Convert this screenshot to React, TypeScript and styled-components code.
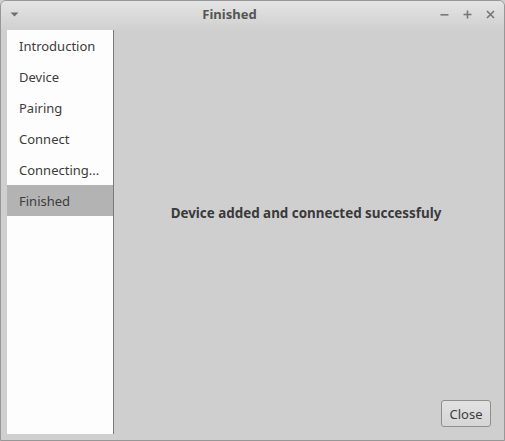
import React from 'react';
import styled, { createGlobalStyle } from 'styled-components';

const GlobalStyle = createGlobalStyle`
  html, body {
    margin: 0;
    padding: 0;
    width: 505px;
    height: 441px;
    overflow: hidden;
    background: #cfcfcf;
  }
  body {
    font-family: "Noto Sans", "Open Sans", sans-serif;
  }
`;

const Window = styled.div`
  box-sizing: border-box;
  width: 505px;
  height: 441px;
  display: flex;
  flex-direction: column;
  background: #cfcfcf;
  border: 1px solid #979797;
  border-radius: 6px 6px 0 0;
  overflow: hidden;
`;

const TitleBar = styled.div`
  height: 29px;
  flex: none;
  display: flex;
  align-items: center;
  padding: 0 9px 3px 9px;
  box-sizing: border-box;
  background: linear-gradient(#e4e4e4, #d0d0d0);
`;

const TitleText = styled.div`
  flex: 1;
  text-align: center;
  font-size: 13px;
  font-weight: bold;
  color: #555555;
`;

const TitleButtons = styled.div`
  display: flex;
  align-items: center;
  gap: 14px;
`;

const IconWrap = styled.span`
  display: flex;
  width: 9px;
  height: 9px;
`;

const Body = styled.div`
  flex: 1;
  display: flex;
  padding: 0 0 6px 6px;
  min-height: 0;
`;

const Sidebar = styled.ul`
  list-style: none;
  margin: 0;
  padding: 0;
  width: 106px;
  background: #fdfdfd;
  border-right: 1px solid #7a7a7a;
`;

const SidebarItem = styled.li<{ $active?: boolean }>`
  height: 31px;
  line-height: 33px;
  padding-left: 12px;
  font-size: 13px;
  color: #3c3c3c;
  background: ${(p) => (p.$active ? '#b3b3b3' : 'transparent')};
  white-space: nowrap;
  overflow: hidden;
`;

const Main = styled.div`
  flex: 1;
  display: flex;
  flex-direction: column;
  padding: 0 13px 7px 0;
`;

const Message = styled.div`
  flex: 1;
  display: flex;
  align-items: center;
  justify-content: center;
  padding: 0 0 4px 7px;
  font-size: 13.4px;
  font-weight: bold;
  color: #3a3a3a;
`;

const ButtonRow = styled.div`
  display: flex;
  justify-content: flex-end;
`;

const Button = styled.button`
  box-sizing: border-box;
  width: 50px;
  height: 27px;
  font-family: inherit;
  font-size: 13px;
  color: #3c3c3c;
  background: linear-gradient(#e2e2e2, #d6d6d6);
  border: 1px solid #8f8f8f;
  border-radius: 3px;
  padding: 0;
`;

const steps = ['Introduction', 'Device', 'Pairing', 'Connect', 'Connecting...', 'Finished'];

const MenuArrow = () => (
  <IconWrap>
    <svg width="9" height="9" viewBox="0 0 9 9">
      <polygon points="0.5,2.5 8.5,2.5 4.5,6.5" fill="#6e6e6e" />
    </svg>
  </IconWrap>
);

const Minimize = () => (
  <IconWrap>
    <svg width="9" height="9" viewBox="0 0 9 9">
      <rect x="0.5" y="4" width="8" height="1.6" fill="#777" />
    </svg>
  </IconWrap>
);

const Maximize = () => (
  <IconWrap>
    <svg width="9" height="9" viewBox="0 0 9 9">
      <rect x="0.5" y="3.7" width="8" height="1.6" fill="#777" />
      <rect x="3.7" y="0.5" width="1.6" height="8" fill="#777" />
    </svg>
  </IconWrap>
);

const CloseIcon = () => (
  <IconWrap>
    <svg width="9" height="9" viewBox="0 0 9 9">
      <path d="M1 1 L8 8 M8 1 L1 8" stroke="#777" strokeWidth="1.7" />
    </svg>
  </IconWrap>
);

const App: React.FC = () => (
  <>
    <GlobalStyle />
    <Window>
      <TitleBar>
        <MenuArrow />
        <TitleText>Finished</TitleText>
        <TitleButtons>
          <Minimize />
          <Maximize />
          <CloseIcon />
        </TitleButtons>
      </TitleBar>
      <Body>
        <Sidebar>
          {steps.map((s) => (
            <SidebarItem key={s} $active={s === 'Finished'}>
              {s}
            </SidebarItem>
          ))}
        </Sidebar>
        <Main>
          <Message>Device added and connected successfuly</Message>
          <ButtonRow>
            <Button>Close</Button>
          </ButtonRow>
        </Main>
      </Body>
    </Window>
  </>
);

export default App;
